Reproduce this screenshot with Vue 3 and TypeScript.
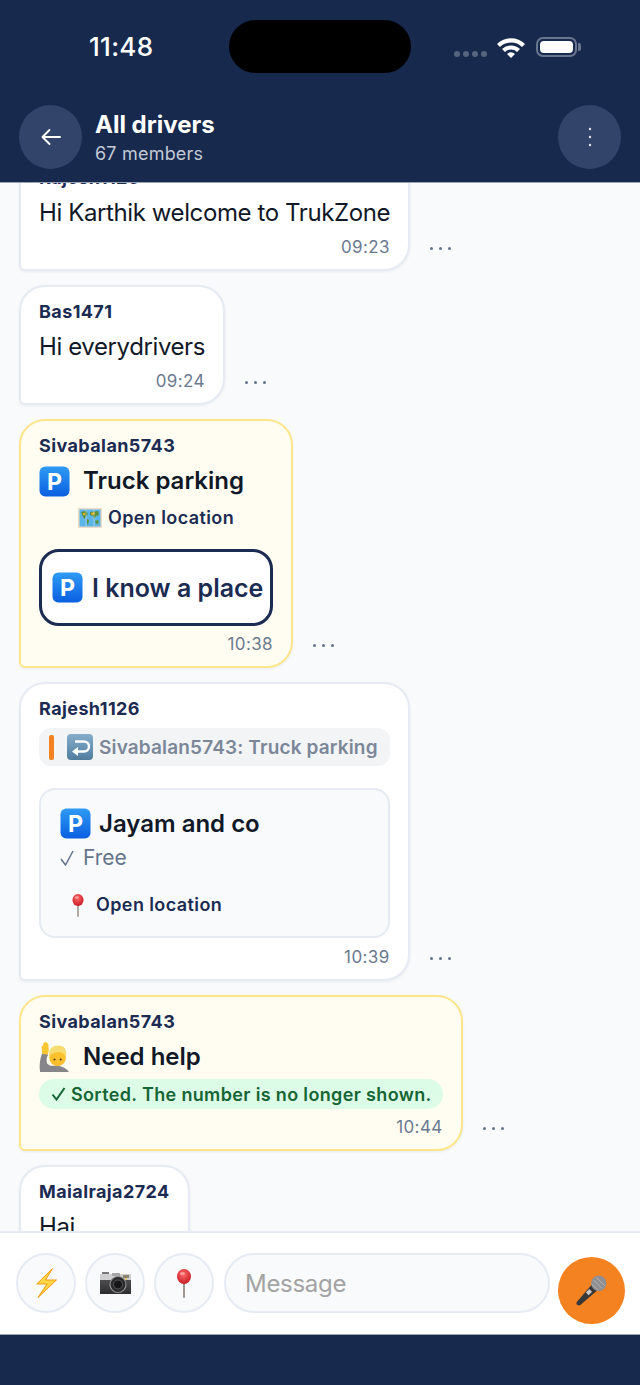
<script setup lang="ts">
interface Plain {
  name: string
  text: string
  time: string
}

const plainTop: Plain[] = [
  { name: 'Rajesh1126', text: 'Hi Karthik welcome to TrukZone', time: '09:23' },
  { name: 'Bas1471', text: 'Hi everydrivers', time: '09:24' },
]
</script>

<template>
  <div class="page">
    <svg class="defs" aria-hidden="true">
      <defs>
        <linearGradient id="blue" x1="0" y1="0" x2="0" y2="1">
          <stop offset="0" stop-color="#2f9bf5" />
          <stop offset="1" stop-color="#0a5fe0" />
        </linearGradient>
        <linearGradient id="steel" x1="0" y1="0" x2="0" y2="1">
          <stop offset="0" stop-color="#86aecb" />
          <stop offset="1" stop-color="#4f7c9e" />
        </linearGradient>
        <linearGradient id="cambody" x1="0" y1="0" x2="0" y2="1">
          <stop offset="0" stop-color="#5a5a5c" />
          <stop offset="1" stop-color="#2e2e30" />
        </linearGradient>
        <radialGradient id="red" cx="0.45" cy="0.35" r="0.7">
          <stop offset="0" stop-color="#ff6a6a" />
          <stop offset="1" stop-color="#c4141f" />
        </radialGradient>
        <symbol id="i-p" viewBox="0 0 32 32">
          <rect x="0.5" y="0.5" width="31" height="31" rx="6" fill="url(#blue)" />
          <text x="16" y="25" text-anchor="middle" font-family="Inter, sans-serif" font-size="24" font-weight="700" fill="#fff">P</text>
        </symbol>
        <symbol id="i-map" viewBox="0 0 24 20">
          <rect width="24" height="20" fill="#eadcc6" />
          <rect x="1.500" y="1.500" width="21" height="17" fill="#5cb6ea" />
          <path d="M3 4l5-1 2 3-2 2-1 3-2-2zM9 11l2 1-1 5-1-2zM12 4l8-1 1 4-3 1-2 3-1-3-3-1zM17 13l3-1 1 3-3 1z" fill="#5f8f35" />
          <path d="M13 5l3-1 1 2-3 1zM5 5l2 0 0 2-2 0z" fill="#e6b534" />
          <path d="M8 1.500v17M16 1.500v17" stroke="#fff" stroke-opacity=".4" />
        </symbol>
        <symbol id="i-reply" viewBox="0 0 26 26">
          <rect width="26" height="26" rx="4" fill="url(#steel)" />
          <path d="M8 7.500h9a5 5 0 0 1 0 10h-7" fill="none" stroke="#fff" stroke-width="2.400" />
          <path d="M11 13l-6 4.500 6 4.500z" fill="#fff" />
        </symbol>
        <symbol id="i-pin" viewBox="0 0 16 29">
          <rect x="7.200" y="12" width="1.600" height="17" rx=".8" fill="#8a7d74" />
          <ellipse cx="8" cy="7.500" rx="7" ry="7.500" fill="url(#red)" />
          <ellipse cx="6.500" cy="4.500" rx="2.500" ry="1.600" fill="#ff9d9d" />
        </symbol>
        <symbol id="i-person" viewBox="0 0 30 30">
          <path d="M1 29c-1-6 0-13 2-18l6 1c-2 3-2 6-1 9l3 2 8 0c4 1 8 3 10 6z" fill="#85858a" />
          <path d="M3 11.500L2.500 4l1.500-.5.500-3h1.500L7 0l1 1 1 1 .5 6-1 4z" fill="#f8c630" />
          <circle cx="18" cy="15.500" r="8" fill="#fbc02d" />
          <path d="M9.800 15c-1-8 3-11.500 8.700-11.500s9 3.500 7.500 11.500c-1-3-3-5-7.500-5-3.500 0-7 2-8.700 5z" fill="#f7dc6f" />
          <circle cx="15" cy="17" r="1" fill="#5b3a1a" />
          <circle cx="21" cy="17" r="1" fill="#5b3a1a" />
        </symbol>
        <symbol id="i-bolt" viewBox="0 0 21 30">
          <path d="M16.500 .5L.8 16H11L2 29.500 20.500 12H9.500z" fill="#ffd64a" stroke="#f59a0b" stroke-width="1" stroke-linejoin="round" />
        </symbol>
        <symbol id="i-camera" viewBox="0 0 31 22">
          <rect y="2" width="31" height="20" fill="url(#cambody)" />
          <rect y="2" width="31" height="6" fill="#cfcfd1" />
          <rect x="2" y="0" width="7" height="2" fill="#77777a" />
          <rect x="12" y="1" width="8" height="3" fill="#a7a7aa" />
          <rect x="23" y="3" width="6" height="3" fill="#8d8470" />
          <circle cx="26" cy="7" r="1" fill="#e8c24a" />
          <circle cx="18" cy="12.500" r="8" fill="#2a2a2c" stroke="#8e8e90" stroke-width="1.200" />
          <circle cx="18" cy="12.500" r="4.500" fill="#161618" stroke="#5a5a5c" />
        </symbol>
        <symbol id="i-mic" viewBox="0 0 32 32">
          <path d="M17 9l6 6L4.500 31c-1 .8-2.500.6-3.300-.3-.9-.9-1-2.200-.2-3.200z" fill="#38383a" />
          <circle cx="23.500" cy="8.500" r="8" fill="#8f8f92" />
          <path d="M18 5l9 9M21 2.500l8.500 8.500M16 9l7 7" stroke="#b5b5b8" />
          <rect x="11" y="16" width="5" height="4" transform="rotate(-45 13 18)" fill="#c8c8ca" />
        </symbol>
      </defs>
    </svg>

    <header class="top">
      <div class="status">
        <div class="clock">11:48</div>
        <div class="island"></div>
        <div class="sys">
          <span class="sig"><i></i><i></i><i></i><i></i></span>
          <svg class="wifi" viewBox="0 0 28 21">
            <path d="M0 7a20 20 0 0 1 28 0l-3 3a15.800 15.800 0 0 0-22 0z" fill="#fff" />
            <path d="M5 12a13 13 0 0 1 18 0l-3 3a8.500 8.500 0 0 0-12 0z" fill="#fff" />
            <path d="M10 17a5.600 5.600 0 0 1 8 0l-4 4z" fill="#fff" />
          </svg>
          <span class="batt"><b></b></span>
        </div>
      </div>
      <div class="bar">
        <button class="round">
          <svg viewBox="0 0 24 24" width="24" height="24" fill="none" stroke="#fff" stroke-width="1.900" stroke-linecap="round" stroke-linejoin="round">
            <path d="M21 12H4M10.500 5L3.500 12l7 7" />
          </svg>
        </button>
        <div class="heading">
          <div class="title">All drivers</div>
          <div class="sub">67 members</div>
        </div>
        <button class="round">
          <svg viewBox="0 0 4 20" width="4" height="20" fill="#dfe3ea">
            <circle cx="2" cy="2" r="1.200" />
            <circle cx="2" cy="10" r="1.200" />
            <circle cx="2" cy="18" r="1.200" />
          </svg>
        </button>
      </div>
    </header>

    <main class="feed">
      <div class="list">
        <div v-for="m in plainTop" :key="m.time" class="row">
          <div class="bubble">
            <div class="name">{{ m.name }}</div>
            <div class="body">{{ m.text }}</div>
            <div class="time after-body">{{ m.time }}</div>
          </div>
          <span class="more"><i></i><i></i><i></i></span>
        </div>

        <div class="row">
          <div class="bubble warm">
            <div class="name">Sivabalan5743</div>
            <div class="head">
              <svg class="e31"><use href="#i-p" /></svg>
              <span>Truck parking</span>
            </div>
            <div class="link center">
              <svg class="map"><use href="#i-map" /></svg>
              <span>Open location</span>
            </div>
            <button class="know">
              <svg class="e31"><use href="#i-p" /></svg>
              <span>I know a place</span>
            </button>
            <div class="time">10:38</div>
          </div>
          <span class="more"><i></i><i></i><i></i></span>
        </div>

        <div class="row">
          <div class="bubble">
            <div class="name">Rajesh1126</div>
            <div class="quote">
              <span class="stripe"></span>
              <svg class="e26"><use href="#i-reply" /></svg>
              <span>Sivabalan5743: Truck parking</span>
            </div>
            <div class="place">
              <div class="place-name">
                <svg class="e31"><use href="#i-p" /></svg>
                <span>Jayam and co</span>
              </div>
              <div class="free">
                <svg class="check" viewBox="0 0 14 16" fill="none" stroke="#64748b" stroke-width="1.500">
                  <path d="M1 9l4.500 6L13 1" />
                </svg>
                <span>Free</span>
              </div>
              <div class="link pinned">
                <svg class="pin"><use href="#i-pin" /></svg>
                <span>Open location</span>
              </div>
            </div>
            <div class="time">10:39</div>
          </div>
          <span class="more"><i></i><i></i><i></i></span>
        </div>

        <div class="row">
          <div class="bubble warm">
            <div class="name">Sivabalan5743</div>
            <div class="head">
              <svg class="e31"><use href="#i-person" /></svg>
              <span>Need help</span>
            </div>
            <div class="sorted">
              <svg class="check-green" viewBox="0 0 15 14" fill="none" stroke="#166534" stroke-width="2">
                <path d="M1.500 7.500l4 5L13.500 1" />
              </svg>
              <span>Sorted. The number is no longer shown.</span>
            </div>
            <div class="time">10:44</div>
          </div>
          <span class="more"><i></i><i></i><i></i></span>
        </div>

        <div class="row">
          <div class="bubble">
            <div class="name">Maialraja2724</div>
            <div class="body">Hai</div>
          </div>
        </div>
      </div>
    </main>

    <footer class="composer">
      <button class="tool"><svg class="bolt"><use href="#i-bolt" /></svg></button>
      <button class="tool"><svg class="cam"><use href="#i-camera" /></svg></button>
      <button class="tool"><svg class="tool-pin"><use href="#i-pin" /></svg></button>
      <div class="input">Message</div>
      <button class="send"><svg class="mic"><use href="#i-mic" /></svg></button>
    </footer>
    <div class="home"></div>
  </div>
</template>

<style>
html,
body {
  margin: 0;
  background: #f8fafc;
}
</style>

<style scoped>
* {
  box-sizing: border-box;
}

.defs {
  position: absolute;
  width: 0;
  height: 0;
}

.page {
  width: 640px;
  height: 1385px;
  display: flex;
  flex-direction: column;
  overflow: hidden;
  font-family: Inter, "Noto Sans", sans-serif;
  color: #111827;
  background: #f8fafc;
}

button {
  font-family: inherit;
  padding: 0;
  border: none;
}

.top {
  flex: none;
  height: 183px;
  background: #17294d;
  border-bottom: 1px solid #9aa3b3;
}

.status {
  display: flex;
  height: 105px;
  padding-top: 20px;
}

.clock {
  width: 229px;
  padding: 11px 0 0 89px;
  font-size: 26px;
  line-height: 32px;
  font-weight: 500;
  letter-spacing: 0.3px;
  color: #fff;
}

.island {
  width: 182px;
  height: 53px;
  border-radius: 27px;
  background: #000;
}

.sys {
  flex: 1;
  display: flex;
  align-items: flex-start;
  padding: 17px 0 0 43px;
}

.sig {
  display: flex;
  gap: 3px;
  margin-top: 14px;
}

.sig i {
  width: 6px;
  height: 6px;
  border-radius: 50%;
  background: #56657f;
}

.wifi {
  width: 28px;
  height: 21px;
  margin-left: 10px;
}

.batt {
  position: relative;
  width: 41px;
  height: 20px;
  margin-left: 11px;
  padding: 2px;
  border: 2px solid #68758e;
  border-radius: 7px;
}

.batt b {
  display: block;
  height: 100%;
  border-radius: 4px;
  background: #fff;
}

.batt::after {
  content: "";
  position: absolute;
  right: -6px;
  top: 4px;
  width: 3px;
  height: 8px;
  border-radius: 0 2px 2px 0;
  background: #68758e;
}

.bar {
  display: flex;
  align-items: center;
  padding: 0 19px;
}

.round {
  flex: none;
  width: 63px;
  height: 64px;
  display: flex;
  align-items: center;
  justify-content: center;
  border-radius: 50%;
  background: #33446a;
}

.heading {
  flex: 1;
  padding: 2px 0 0 13px;
  color: #fff;
}

.title {
  font-size: 24px;
  line-height: 32px;
  font-weight: 700;
}

.sub {
  font-size: 18px;
  line-height: 26px;
  letter-spacing: 0.2px;
  color: #c3cad6;
}

.feed {
  flex: 1;
  min-height: 0;
  overflow: hidden;
}

.list {
  display: flex;
  flex-direction: column;
  align-items: flex-start;
  gap: 14px;
  margin-top: -32px;
  padding: 0 19px;
}

.row {
  display: flex;
  align-items: flex-end;
}

.bubble {
  flex: none;
  padding: 13px 18px 10px;
  background: #fff;
  border: 2px solid #e6ebf3;
  border-radius: 26px 26px 26px 6px;
  box-shadow: 0 1px 3px rgba(15, 23, 42, 0.06);
}

.warm {
  background: #fffdf2;
  border-color: #fde68a;
}

.name {
  font-size: 18px;
  line-height: 24px;
  font-weight: 700;
  letter-spacing: 0.4px;
  color: #1b2b52;
}

.body {
  margin-top: 6px;
  font-size: 24px;
  line-height: 34px;
  letter-spacing: -0.4px;
}

.time {
  margin-top: 6px;
  text-align: right;
  font-size: 17px;
  line-height: 24px;
  letter-spacing: 0.4px;
  color: #6b7a90;
}

.after-body {
  margin-top: 5px;
}

.place + .time {
  margin-top: 7px;
}

.more {
  display: flex;
  gap: 6px;
  margin: 0 0 21px 20px;
}

.more i {
  width: 3px;
  height: 3px;
  border-radius: 50%;
  background: #64748b;
}

.head {
  display: flex;
  align-items: center;
  gap: 13px;
  margin-top: 5px;
  font-size: 24px;
  line-height: 36px;
  font-weight: 600;
}

.e31 {
  flex: none;
  width: 31px;
  height: 31px;
}

.map {
  flex: none;
  width: 24px;
  height: 20px;
}

.e26 {
  flex: none;
  width: 26px;
  height: 26px;
}

.link {
  display: flex;
  align-items: center;
  gap: 6px;
  font-size: 18px;
  line-height: 26px;
  font-weight: 600;
  letter-spacing: 0.4px;
  color: #1b2b52;
}

.center {
  justify-content: center;
  margin-top: 6px;
}

.know {
  display: flex;
  align-items: center;
  gap: 9px;
  width: 234px;
  height: 77px;
  margin-top: 18px;
  padding-left: 10px;
  background: #fff;
  border: 3px solid #1b2b52;
  border-radius: 20px;
  font-size: 25px;
  font-weight: 600;
  color: #1b2b52;
  white-space: nowrap;
}

.quote {
  display: flex;
  align-items: center;
  height: 38px;
  margin-top: 7px;
  padding: 0 12px 0 10px;
  background: #f3f4f6;
  border-radius: 12px;
  font-size: 19px;
  font-weight: 600;
  letter-spacing: 0.15px;
  color: #7b8798;
  white-space: nowrap;
}

.stripe {
  width: 5px;
  height: 25px;
  margin-right: 13px;
  border-radius: 2px;
  background: #f58220;
}

.quote .e26 {
  margin-right: 6px;
}

.place {
  margin-top: 22px;
  padding: 18px 19px 18px;
  background: #f8fafc;
  border: 2px solid #e6ebf3;
  border-radius: 16px;
}

.place-name {
  display: flex;
  align-items: center;
  gap: 8px;
  font-size: 24px;
  line-height: 31px;
  font-weight: 600;
}

.free {
  display: flex;
  align-items: center;
  gap: 9px;
  margin-top: 4px;
  font-size: 21px;
  line-height: 30px;
  color: #64748b;
}

.check {
  width: 14px;
  height: 16px;
}

.pinned {
  gap: 8px;
  margin-top: 19px;
  padding-left: 8px;
}

.pin {
  width: 20px;
  height: 23px;
}

.sorted {
  display: flex;
  align-items: center;
  gap: 5px;
  margin-top: 4px;
  padding: 0 11px 0 12px;
  height: 30px;
  font-size: 18px;
  font-weight: 600;
  letter-spacing: 0.35px;
  color: #166534;
  background: #dcfce7;
  border-radius: 15px;
  white-space: nowrap;
}

.check-green {
  flex: none;
  width: 15px;
  height: 14px;
}

.composer {
  flex: none;
  height: 104px;
  display: flex;
  align-items: flex-start;
  padding: 20px 15px 0 16px;
  background: #fff;
  border-top: 2px solid #e6ebf3;
  border-bottom: 1px solid #a0a4ac;
}

.tool {
  flex: none;
  width: 60px;
  height: 60px;
  margin-right: 9px;
  display: flex;
  align-items: center;
  justify-content: center;
  border-radius: 50%;
  background: #f8fafc;
  border: 2px solid #e6ebf3;
}

.bolt {
  width: 21px;
  height: 30px;
}

.cam {
  width: 31px;
  height: 22px;
}

.tool-pin {
  width: 16px;
  height: 29px;
}

.input {
  flex: 1;
  height: 60px;
  margin-left: 1px;
  padding-left: 19px;
  line-height: 58px;
  font-size: 24px;
  letter-spacing: -0.3px;
  color: #a3a3a3;
  background: #f8fafc;
  border: 2px solid #e6ebf3;
  border-radius: 30px;
}

.send {
  flex: none;
  width: 67px;
  height: 67px;
  margin: 4px 0 0 8px;
  display: flex;
  align-items: center;
  justify-content: center;
  border-radius: 50%;
  background: #f58220;
}

.mic {
  width: 31px;
  height: 31px;
}

.home {
  flex: none;
  height: 50px;
  background: #17294d;
}
</style>
